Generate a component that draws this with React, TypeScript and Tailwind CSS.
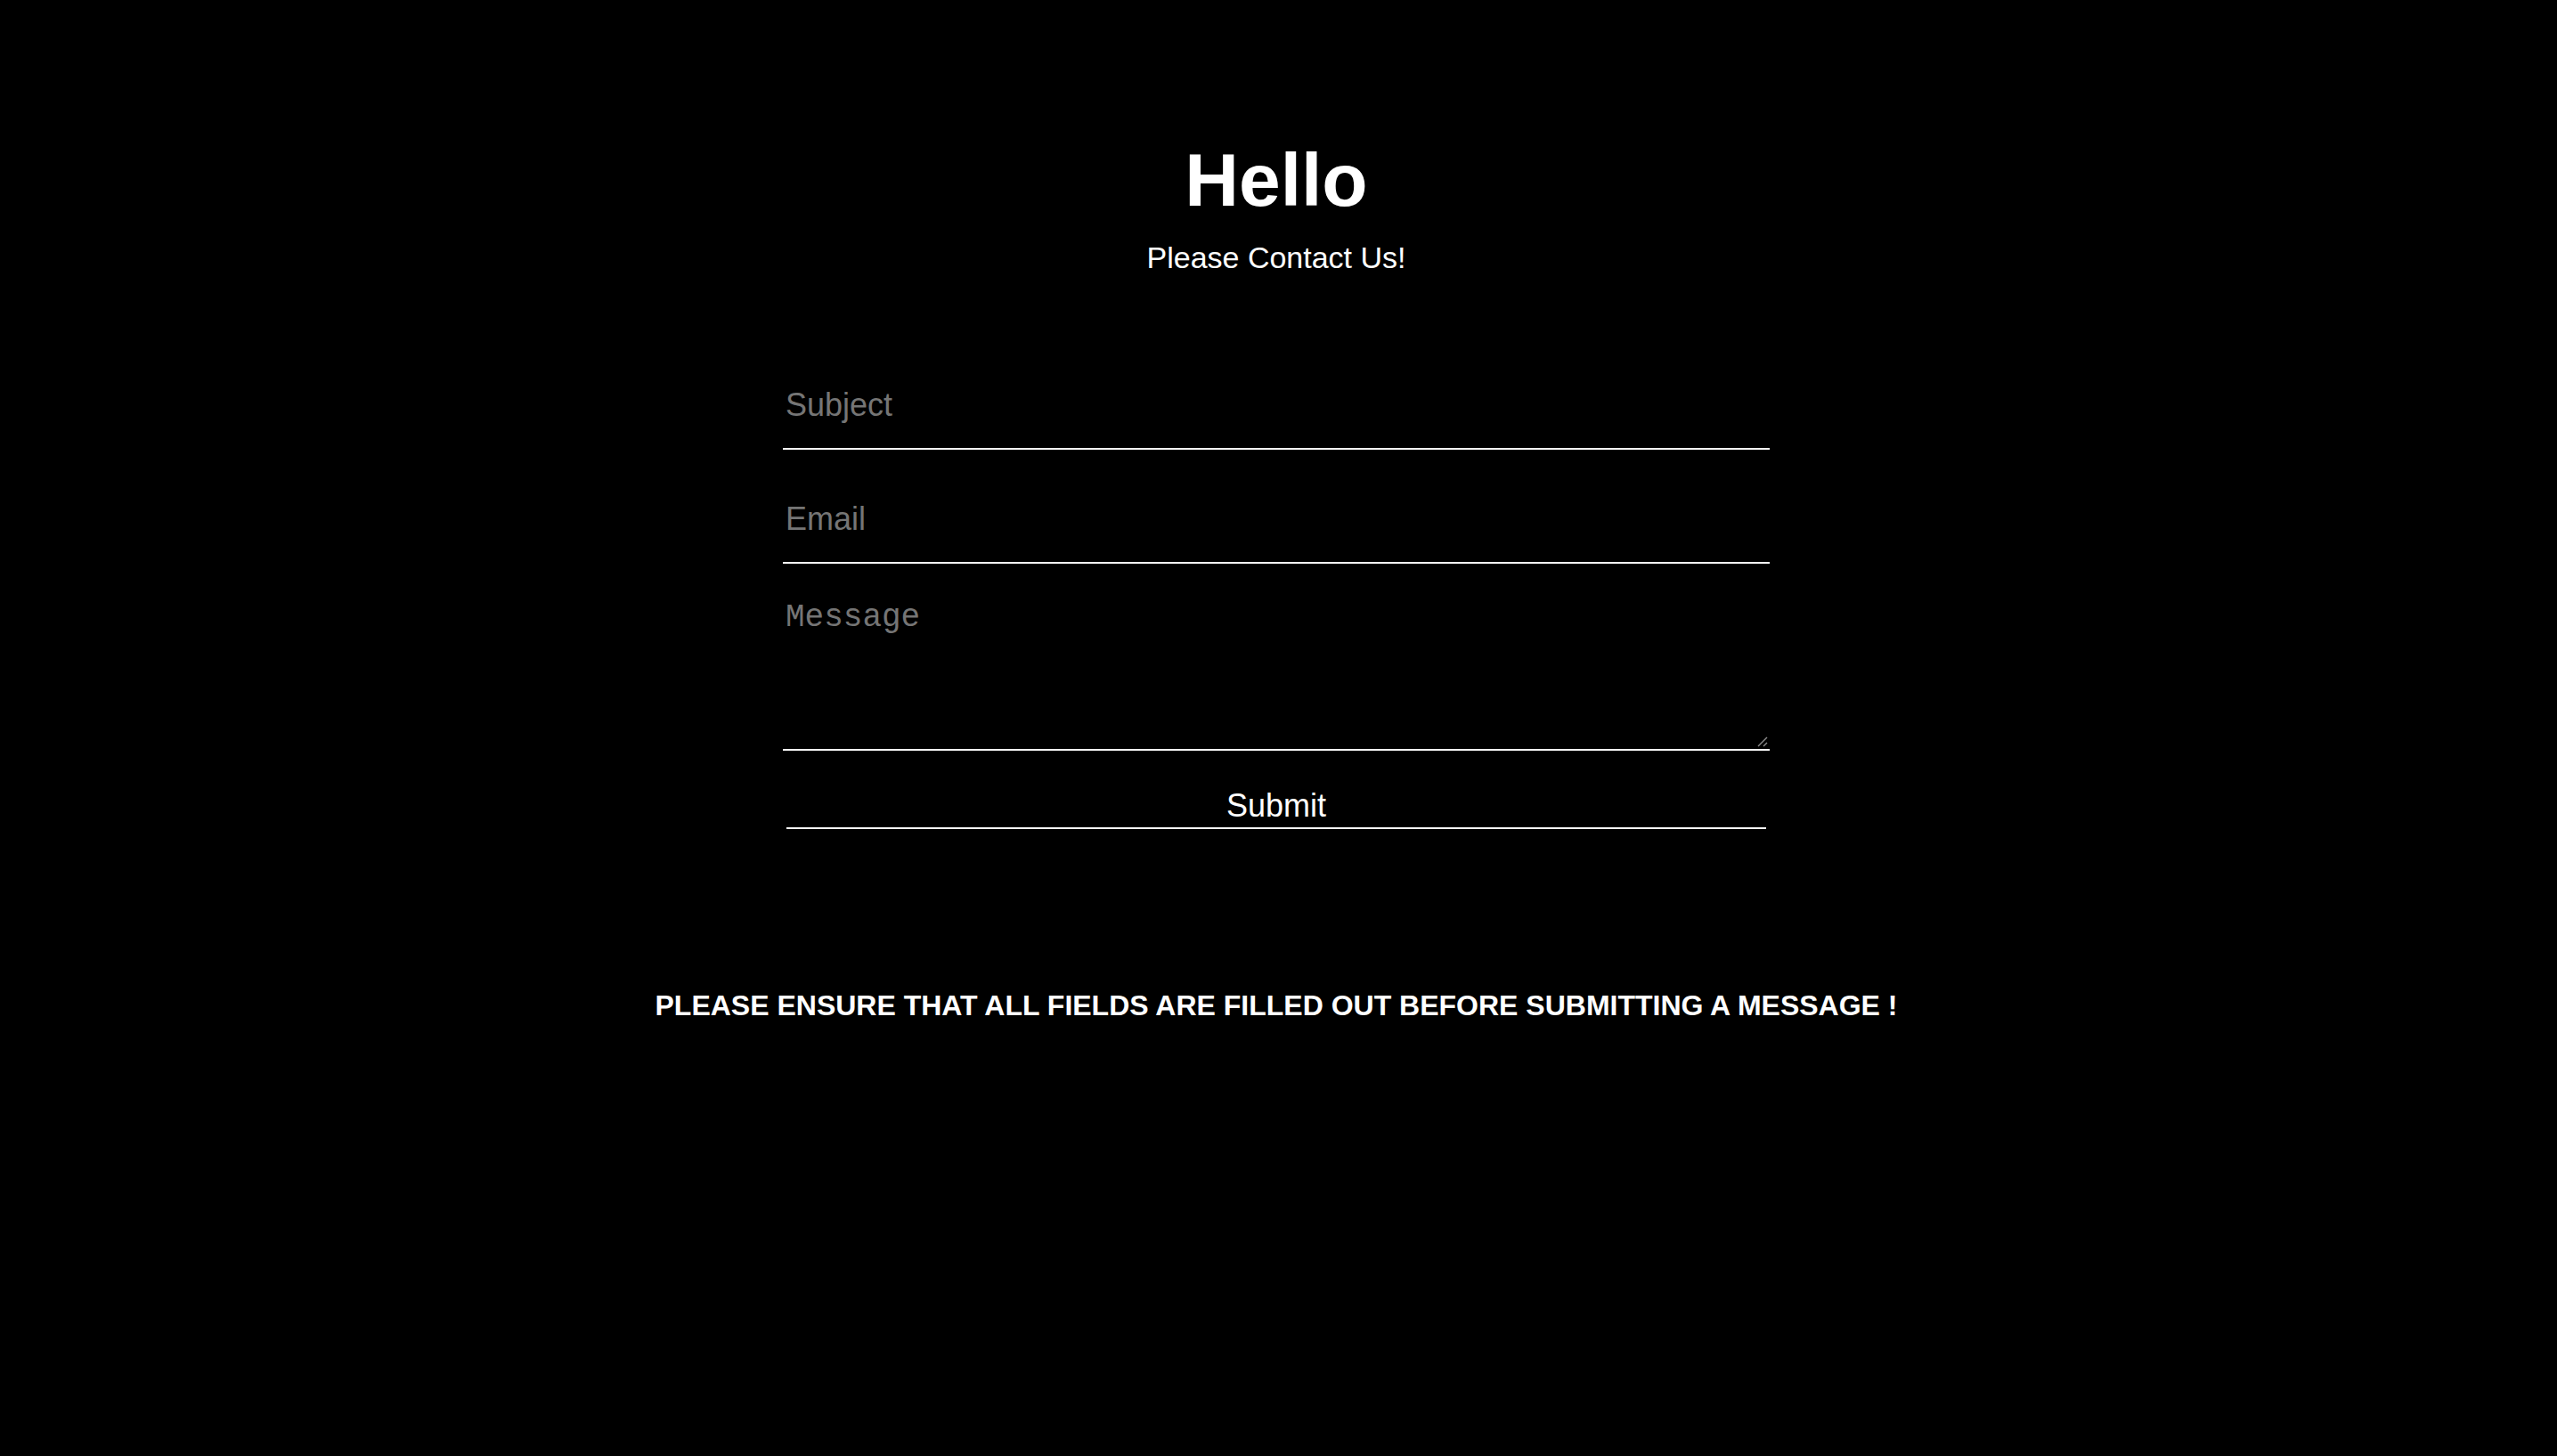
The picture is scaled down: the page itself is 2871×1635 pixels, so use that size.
import { useState } from "react";

export default function App() {
  const [subject, setSubject] = useState("");
  const [email, setEmail] = useState("");
  const [message, setMessage] = useState("");

  return (
    <div className="min-h-screen w-full bg-black text-white font-['Liberation_Sans',Arial,sans-serif] pr-[5px]">
      <div className="flex flex-col items-center pt-[154px]">
        {/* Heading */}
        <h1 className="text-[84px] leading-[96px] font-bold">Hello</h1>
        <p className="mt-[20px] text-[34px] leading-[39px]">Please Contact Us!</p>

        {/* Contact form */}
        <form
          className="mt-[105px] w-[1108px] flex flex-col"
          onSubmit={(e) => e.preventDefault()}
        >
          <input
            type="text"
            value={subject}
            onChange={(e) => setSubject(e.target.value)}
            placeholder="Subject"
            className="w-full bg-transparent text-white text-[36px] leading-[41px] px-[3px] pt-[20px] pb-[28px] border-b-2 border-white outline-none placeholder:text-[#757575]"
          />
          <input
            type="email"
            value={email}
            onChange={(e) => setEmail(e.target.value)}
            placeholder="Email"
            className="mt-[37px] w-full bg-transparent text-white text-[36px] leading-[41px] px-[3px] pt-[20px] pb-[28px] border-b-2 border-white outline-none placeholder:text-[#757575]"
          />
          <div className="relative mt-[20px]">
            <textarea
              value={message}
              onChange={(e) => setMessage(e.target.value)}
              placeholder="Message"
              className="block w-full h-[190px] resize-none bg-transparent text-white font-['Liberation_Mono','Courier_New',monospace] text-[36px] leading-[41px] px-[3px] pt-[20px] border-b-2 border-white outline-none placeholder:text-[#757575]"
            />
            {/* resize grip */}
            <svg
              className="pointer-events-none absolute right-[2px] bottom-[4px] w-[12px] h-[12px]"
              viewBox="0 0 12 12"
            >
              <line x1="1" y1="11" x2="11" y2="1" stroke="#8a8a8a" strokeWidth="1.5" />
              <line x1="7" y1="11" x2="11" y2="7" stroke="#8a8a8a" strokeWidth="1.5" />
            </svg>
          </div>
          <button
            type="submit"
            className="mt-[21px] mx-[4px] pt-[20px] pb-[4px] text-[36px] leading-[41px] text-white bg-transparent border-b-2 border-white cursor-pointer"
          >
            Submit
          </button>
        </form>

        <p className="mt-[180px] text-[32px] leading-[37px] font-bold uppercase">
          Please ensure that all fields are filled out before submitting a message !
        </p>
      </div>
    </div>
  );
}
